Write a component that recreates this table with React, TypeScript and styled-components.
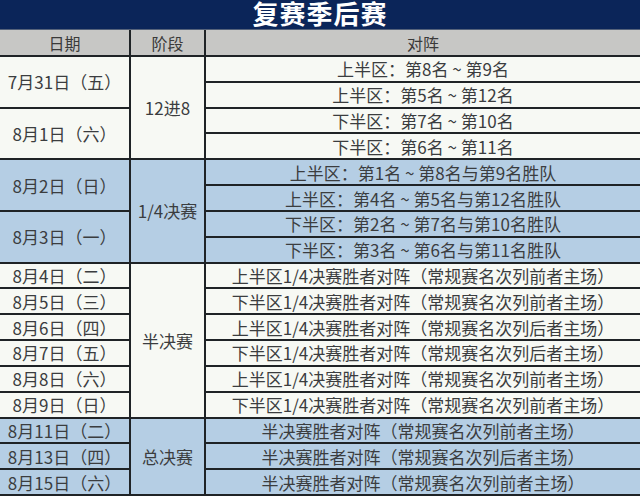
import React from "react";
import styled, { createGlobalStyle } from "styled-components";

const GlobalStyle = createGlobalStyle`
  html, body { margin: 0; padding: 0; background: #f7f9f4; }
  body { font-family: "Noto Sans CJK SC", "Noto Sans", sans-serif; }
`;

type Tone = "white" | "blue";

const Page = styled.div`
  width: 640px;
  height: 496px;
  overflow: hidden;
  display: flex;
  flex-direction: column;
`;

const TitleBar = styled.div`
  height: 30px;
  flex: none;
  background: #0b2559;
  color: #ffffff;
  display: flex;
  align-items: center;
  justify-content: center;
  font-family: "Liberation Sans", "Noto Sans CJK SC", sans-serif;
  font-size: 26px;
  font-weight: 700;
  letter-spacing: 1px;
  line-height: 28px;
  border-bottom: 1px solid #55627a;
  box-sizing: border-box;
`;

const Table = styled.div`
  flex: 1;
  display: grid;
  grid-template-columns: 129px 73px 1fr;
  grid-template-rows: 25px repeat(17, 1fr);
  column-gap: 2px;
  row-gap: 2px;
  padding-bottom: 2px;
  background: #1f2326;
`;

const HeaderCell = styled.div`
  background: #c7c7c5;
  color: #3a3a3a;
  font-size: 16px;
  display: flex;
  align-items: center;
  justify-content: center;
  line-height: 1;
`;

const Cell = styled.div<{ $tone: Tone; $col: number; $span?: number }>`
  grid-column: ${(p) => p.$col};
  grid-row: span ${(p) => p.$span ?? 1};
  background: ${(p) => (p.$tone === "blue" ? "#b5cee4" : "#f7f9f4")};
  color: #3b3d3f;
  font-size: 17px;
  display: flex;
  align-items: center;
  justify-content: center;
  white-space: nowrap;
  line-height: 1;
`;

type Section = {
  tone: Tone;
  stage: string;
  dates: { label: string; span: number }[];
  matches: string[];
};

const sections: Section[] = [
  {
    tone: "white",
    stage: "12进8",
    dates: [
      { label: "7月31日（五）", span: 2 },
      { label: "8月1日（六）", span: 2 },
    ],
    matches: [
      "上半区：第8名 ~ 第9名",
      "上半区：第5名 ~ 第12名",
      "下半区：第7名 ~ 第10名",
      "下半区：第6名 ~ 第11名",
    ],
  },
  {
    tone: "blue",
    stage: "1/4决赛",
    dates: [
      { label: "8月2日（日）", span: 2 },
      { label: "8月3日（一）", span: 2 },
    ],
    matches: [
      "上半区：第1名 ~ 第8名与第9名胜队",
      "上半区：第4名 ~ 第5名与第12名胜队",
      "下半区：第2名 ~ 第7名与第10名胜队",
      "下半区：第3名 ~ 第6名与第11名胜队",
    ],
  },
  {
    tone: "white",
    stage: "半决赛",
    dates: [
      { label: "8月4日（二）", span: 1 },
      { label: "8月5日（三）", span: 1 },
      { label: "8月6日（四）", span: 1 },
      { label: "8月7日（五）", span: 1 },
      { label: "8月8日（六）", span: 1 },
      { label: "8月9日（日）", span: 1 },
    ],
    matches: [
      "上半区1/4决赛胜者对阵（常规赛名次列前者主场）",
      "下半区1/4决赛胜者对阵（常规赛名次列前者主场）",
      "上半区1/4决赛胜者对阵（常规赛名次列后者主场）",
      "下半区1/4决赛胜者对阵（常规赛名次列后者主场）",
      "上半区1/4决赛胜者对阵（常规赛名次列前者主场）",
      "下半区1/4决赛胜者对阵（常规赛名次列前者主场）",
    ],
  },
  {
    tone: "blue",
    stage: "总决赛",
    dates: [
      { label: "8月11日（二）", span: 1 },
      { label: "8月13日（四）", span: 1 },
      { label: "8月15日（六）", span: 1 },
    ],
    matches: [
      "半决赛胜者对阵（常规赛名次列前者主场）",
      "半决赛胜者对阵（常规赛名次列后者主场）",
      "半决赛胜者对阵（常规赛名次列前者主场）",
    ],
  },
];

function renderSection(s: Section, si: number) {
  const out: React.ReactNode[] = [];
  let dateIdx = 0;
  let nextDateRow = 0;
  s.matches.forEach((m, i) => {
    if (i === nextDateRow && dateIdx < s.dates.length) {
      const d = s.dates[dateIdx];
      out.push(
        <Cell key={`d${si}-${i}`} $tone={s.tone} $col={1} $span={d.span}>
          {d.label}
        </Cell>
      );
      nextDateRow += d.span;
      dateIdx += 1;
    }
    if (i === 0) {
      out.push(
        <Cell key={`s${si}`} $tone={s.tone} $col={2} $span={s.matches.length}>
          {s.stage}
        </Cell>
      );
    }
    out.push(
      <Cell key={`m${si}-${i}`} $tone={s.tone} $col={3}>
        {m}
      </Cell>
    );
  });
  return out;
}

export default function App() {
  return (
    <>
      <GlobalStyle />
      <Page>
        <TitleBar>复赛季后赛</TitleBar>
        <Table>
          <HeaderCell>日期</HeaderCell>
          <HeaderCell>阶段</HeaderCell>
          <HeaderCell>对阵</HeaderCell>
          {sections.map((s, i) => renderSection(s, i))}
        </Table>
      </Page>
    </>
  );
}
